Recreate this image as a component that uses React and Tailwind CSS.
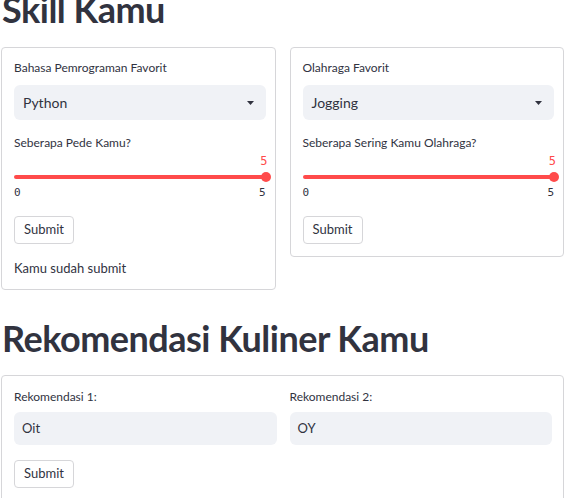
import React from "react";

const font = { fontFamily: "Lato, 'Noto Sans', sans-serif" };

function Caret() {
  return (
    <svg width="7" height="4" viewBox="0 0 7 4" className="shrink-0">
      <path d="M0 0 L7 0 L3.5 4 Z" fill="#31333f" />
    </svg>
  );
}

function Select({ value }) {
  return (
    <div className="flex h-[35px] items-center justify-between rounded-[6px] bg-[#f0f2f6] pl-[9px] pr-[12px] text-[14px] text-[#31333f]">
      <span>{value}</span>
      <Caret />
    </div>
  );
}

function Slider({ label }) {
  return (
    <div className="mt-[15px]">
      <div className="text-[12px] leading-[16px] text-[#31333f]">{label}</div>
      <div className="relative mt-[2px] h-[49px]">
        <div className="absolute right-0 top-[1px] translate-x-[2px] text-[12px] leading-[14px] text-[#ff4b4b] font-['DejaVu_Sans_Mono',monospace]">5</div>
        <div className="absolute left-0 right-0 top-[22px] h-[4px] rounded-full bg-[#ff4b4b]" />
        <div className="absolute right-[-5px] top-[19px] h-[10px] w-[10px] rounded-full bg-[#ff4b4b]" />
        <div className="absolute left-0 right-0 top-[33px] flex justify-between text-[11px] leading-[14px] text-[#31333f] font-['DejaVu_Sans_Mono',monospace]">
          <span>0</span>
          <span>5</span>
        </div>
      </div>
    </div>
  );
}

function Button() {
  return (
    <button className="flex h-[28px] w-[60px] items-center justify-center rounded-[4px] border border-[#d6d6d9] bg-white text-[13px] text-[#31333f]">
      Submit
    </button>
  );
}

function Card({ title, value, slider, extra }) {
  return (
    <div className="rounded-[4px] border border-[#d6d6d9] pb-[12px] pl-[12px] pr-[9px] pt-[12px]">
      <div className="mb-[9px] text-[12px] leading-[16px] text-[#31333f]">{title}</div>
      <Select value={value} />
      <Slider label={slider} />
      <div className="mt-[14px]">
        <Button />
      </div>
      {extra && (
        <div className="mt-[15px] text-[13px] leading-[18px] text-[#31333f]">{extra}</div>
      )}
    </div>
  );
}

function Input({ label, value }) {
  return (
    <div>
      <div className="mb-[7px] text-[12px] leading-[16px] text-[#31333f]">{label}</div>
      <div className="flex h-[33px] items-center rounded-[6px] bg-[#f0f2f6] px-[8px] text-[13px] text-[#31333f]">
        {value}
      </div>
    </div>
  );
}

export default function App() {
  return (
    <div style={font} className="h-[498px] w-[569px] overflow-hidden bg-white pl-[1px] pr-[5px]">
      <h1 className="-mt-[11px] pl-[1px] text-[36px] font-bold leading-[41px] tracking-[-0.5px] text-[#31333f]">
        Skill Kamu
      </h1>
      <div className="mt-[17px] grid grid-cols-2 items-start gap-[14px]">
        <Card
          title="Bahasa Pemrograman Favorit"
          value="Python"
          slider="Seberapa Pede Kamu?"
          extra="Kamu sudah submit"
        />
        <Card
          title="Olahraga Favorit"
          value="Jogging"
          slider="Seberapa Sering Kamu Olahraga?"
        />
      </div>
      <h2 className="mt-[26px] pl-[1px] text-[36px] font-bold leading-[44px] tracking-[-0.5px] text-[#31333f]">
        Rekomendasi Kuliner Kamu
      </h2>
      <div className="mt-[15px] rounded-[4px] border border-[#d6d6d9] pb-[24px] pl-[12px] pr-[11px] pt-[13px]">
        <div className="grid grid-cols-2 gap-[13px]">
          <Input label="Rekomendasi 1:" value="Oit" />
          <Input label="Rekomendasi 2:" value="OY" />
        </div>
        <div className="mt-[15px]">
          <Button />
        </div>
      </div>
    </div>
  );
}
